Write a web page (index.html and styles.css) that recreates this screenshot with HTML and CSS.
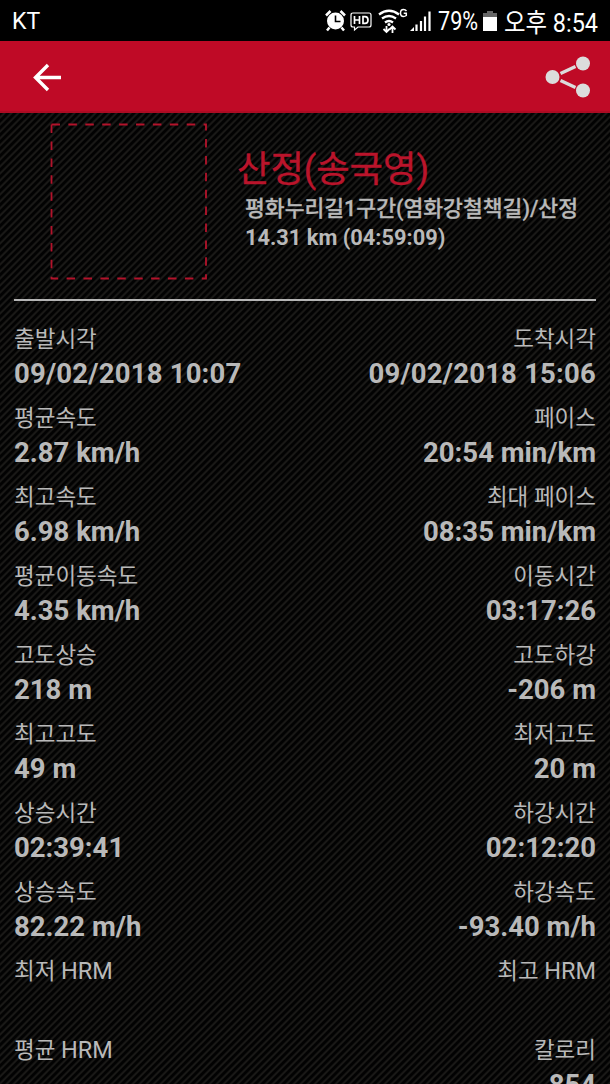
FILE: index.html
```
<!DOCTYPE html>
<html lang="ko">
<head>
    <meta charset="UTF-8">
    <meta name="viewport" content="width=device-width, initial-scale=1.0">
    <title>산정(송국영)</title>
    <link rel="stylesheet" href="styles.css">
</head>
<body>
    <div class="status-bar">
        <span class="carrier">KT</span>
        <svg class="status-icons" width="110" height="28" viewBox="0 0 110 28" fill="none" stroke="#fff">
            <!-- alarm -->
            <circle cx="10.500" cy="14" r="8.500" fill="#fff" stroke="none"/>
            <path d="M1 8.500l4.500-4.500M20 8.500l-4.500-4.500M4.500 20.500l-2.500 3M16.500 20.500l2.500 3" stroke-width="2.500"/>
            <path d="M10.500 8.500v6h5" stroke="#000" stroke-width="1.600"/>
            <!-- HD voice -->
            <path d="M28 6h16q2 0 2 2v10q0 2-2 2H33l-3.500 3V20H28q-2 0-2-2V8q0-2 2-2z" stroke-width="1.200"/>
            <path d="M29.500 9v8M34.500 9v8M29.500 13h5M38 9.600v6.800h2q3 0 3-3.400t-3-3.400z" stroke-width="1.700"/>
            <!-- wifi -->
            <path d="M54 7.500q10-7.500 20 0M57 11.500q7-5 14 0M60 15.500q4-3 8 0" stroke-width="2.300"/>
            <circle cx="64" cy="17.500" r="1.600" fill="#fff" stroke="none"/>
            <path d="M61.500 25v-6M58.500 22l3 3 3-3M67.500 26v-6M64.500 22.500l3-3 3 3" stroke-width="1.800"/>
            <path d="M81.500 4q-1.200-1.500-3-1.500-3 0-3 3.500t3 3.500q1.500 0 2.800-1v-2.300h-2.600" stroke-width="1.500"/>
            <!-- signal -->
            <path d="M85 24l4-4v4z" fill="#fff" stroke="none"/>
            <path d="M91.500 24v-6.500M96 24V14M100 24V9.500M104.500 24V4.500" stroke-width="2.200"/>
        </svg>
        <span class="percent">79%</span>
        <svg class="battery" width="14" height="20" viewBox="0 0 14 20">
            <path d="M4 0h6v2h4v18H0V2h4z" fill="#666"/>
            <path d="M0 6h14v14H0z" fill="#fff"/>
        </svg>
        <span class="clock">오후 8:54</span>
    </div>

    <header class="toolbar">
        <svg width="30" height="30" viewBox="0 0 30 30" fill="none" stroke="#fff" stroke-width="3.400">
            <path d="M28 15.500H3.500M15 3L2.500 15.500 15 28"/>
        </svg>
        <svg width="46" height="44" viewBox="0 0 46 44" fill="#dcdcdc" stroke="#dcdcdc">
            <circle cx="7.500" cy="22" r="7" stroke="none"/>
            <circle cx="38" cy="8.500" r="7" stroke="none"/>
            <circle cx="38" cy="35.500" r="7" stroke="none"/>
            <path d="M15.500 18.500l15-7M15.500 25.500l15 7" stroke-width="3.400"/>
        </svg>
    </header>

    <main class="content">
        <section class="summary">
            <svg class="photo" width="158" height="158" viewBox="0 0 158 158" fill="none" stroke="#b3132b" stroke-width="1.800">
                <path d="M1.500 1.500H156V155.500H1.500z" stroke-dasharray="8.500 8.400"/>
            </svg>
            <div class="summary-text">
                <h1>산정(송국영)</h1>
                <p class="course">평화누리길1구간(염화강철책길)/산정</p>
                <p>14.31 km (04:59:09)</p>
            </div>
        </section>

        <section class="stats">
            <div class="stat"><span>출발시각</span><b class="date">09/02/2018 10:07</b></div>
            <div class="stat"><span>도착시각</span><b class="date">09/02/2018 15:06</b></div>
            <div class="stat"><span>평균속도</span><b>2.87 km/h</b></div>
            <div class="stat"><span>페이스</span><b>20:54 min/km</b></div>
            <div class="stat"><span>최고속도</span><b>6.98 km/h</b></div>
            <div class="stat"><span>최대 페이스</span><b>08:35 min/km</b></div>
            <div class="stat"><span>평균이동속도</span><b>4.35 km/h</b></div>
            <div class="stat"><span>이동시간</span><b>03:17:26</b></div>
            <div class="stat"><span>고도상승</span><b>218 m</b></div>
            <div class="stat"><span>고도하강</span><b>-206 m</b></div>
            <div class="stat"><span>최고고도</span><b>49 m</b></div>
            <div class="stat"><span>최저고도</span><b>20 m</b></div>
            <div class="stat"><span>상승시간</span><b>02:39:41</b></div>
            <div class="stat"><span>하강시간</span><b>02:12:20</b></div>
            <div class="stat"><span>상승속도</span><b>82.22 m/h</b></div>
            <div class="stat"><span>하강속도</span><b>-93.40 m/h</b></div>
            <div class="stat"><span>최저 <i>HRM</i></span><b></b></div>
            <div class="stat"><span>최고 <i>HRM</i></span><b></b></div>
            <div class="stat"><span>평균 <i>HRM</i></span><b></b></div>
            <div class="stat"><span>칼로리</span><b>854</b></div>
        </section>
    </main>
</body>
</html>
```
FILE: styles.css
```
* {
    box-sizing: border-box;
}
body {
    margin: 0;
    height: 1084px;
    overflow: hidden;
    display: flex;
    flex-direction: column;
    background: #000;
    color: #b9b9b9;
    font-family: Roboto, "Noto Sans CJK KR", sans-serif;
}
.status-bar {
    flex: none;
    height: 41px;
    padding: 0 12px;
    display: flex;
    align-items: center;
    background: #000;
    color: #fff;
    font-size: 26px;
    white-space: nowrap;
}
.carrier {
    margin-right: auto;
    padding-top: 1px;
    font-size: 23px;
}
.percent {
    margin-left: 3px;
    width: 41px;
    transform: scaleX(0.83);
    transform-origin: left;
}
.battery {
    margin: 0 7px 0 4px;
}
.clock {
    width: 94px;
    transform: scaleX(0.9);
    transform-origin: left;
}
.toolbar {
    flex: none;
    height: 72px;
    padding: 2px 19px 0 33px;
    display: flex;
    align-items: center;
    justify-content: space-between;
    background: #bf0a26;
    border-bottom: 2px solid #ac0b23;
}
.content {
    flex: 1;
    min-height: 0;
    overflow: hidden;
    padding: 0 14px;
    background: repeating-linear-gradient(135deg, #020202 0, #020202 1.500px, #1b1a18 3px, #1b1a18 3.500px, #020202 4.950px);
}
.summary {
    display: flex;
    height: 188px;
    padding: 10px 0 0 36px;
    border-bottom: 2px solid #b5b5b5;
}
.photo {
    flex: none;
}
.summary-text {
    padding: 23px 0 0 37px;
    white-space: nowrap;
}
.summary-text h1 {
    margin: 0 0 0 -8px;
    color: #ba142b;
    font-size: 36.300px;
    font-weight: 400;
    line-height: 48px;
    -webkit-text-stroke: 0.4px #ba142b;
}
.summary-text p {
    margin: 0;
    font-size: 21.800px;
    font-weight: 700;
    line-height: 29px;
}
.summary-text .course {
    font-size: 21.550px;
    font-weight: 500;
    -webkit-text-stroke: 0.3px #b9b9b9;
}
.stats {
    display: grid;
    grid-template-columns: 1fr 1fr;
    grid-auto-rows: 79px;
    padding-top: 21px;
}
.stat {
    display: flex;
    flex-direction: column;
    white-space: nowrap;
}
.stat:nth-child(even) {
    align-items: flex-end;
}
.stat span {
    font-size: 22.500px;
    line-height: 35px;
}
.stat i {
    font-size: 23.500px;
    font-style: normal;
}
.stat b {
    font-size: 27.500px;
    font-weight: 700;
    line-height: 34px;
}
.stat .date {
    letter-spacing: 0.2px;
}
```
